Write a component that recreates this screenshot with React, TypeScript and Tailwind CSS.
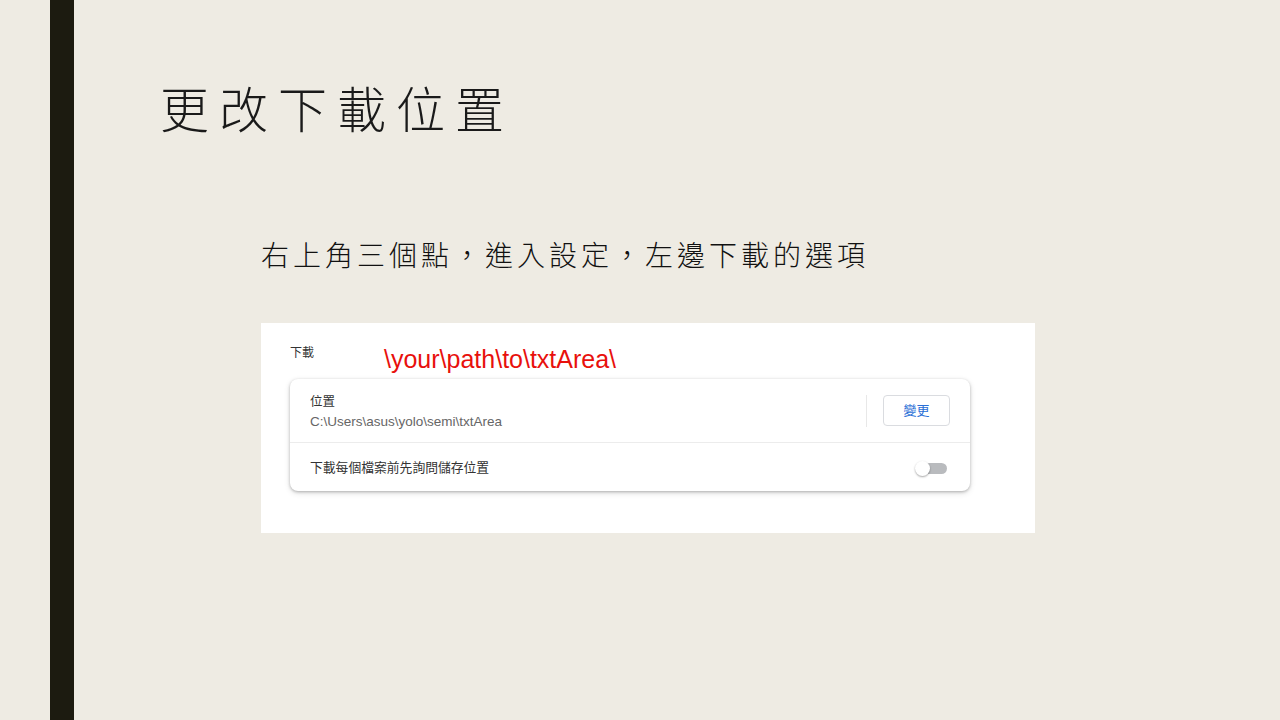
export default function App() {
  const cjk = "'Noto Sans CJK TC', 'Noto Sans', sans-serif";
  const ui = "'Liberation Sans', 'Noto Sans CJK TC', sans-serif";

  return (
    <div className="w-[1280px] h-[720px] bg-[#eeebe3] flex overflow-hidden">
      {/* left accent bar */}
      <div className="ml-[50px] w-[24px] h-full bg-[#1c1b10]" />

      <div className="flex-1 flex flex-col">
        {/* title */}
        <h1
          className="ml-[86px] mt-[76px] text-[49px] leading-[62px] tracking-[10px] text-[#1a1a1a] font-light"
          style={{ fontFamily: cjk }}
        >
          更改下載位置
        </h1>

        {/* subtitle */}
        <p
          className="ml-[187px] mt-[98px] text-[28px] leading-[36px] tracking-[4px] text-[#111] font-light"
          style={{ fontFamily: cjk }}
        >
          右上角三個點，進入設定，左邊下載的選項
        </p>

        {/* screenshot panel */}
        <div className="ml-[187px] mt-[51px] w-[774px] h-[210px] bg-white flex flex-col pl-[29px] pt-[20px]">
          <div className="flex items-start h-[36px]">
            <span className="text-[12px] leading-[18px] text-[#333] mt-[1px] w-[94px]" style={{ fontFamily: ui }}>
              下載
            </span>
            <span
              className="text-[25px] leading-[30px] text-[#e8100c] mt-[1px]"
              style={{ fontFamily: "'Liberation Sans', Arial, sans-serif" }}
            >
              \your\path\to\txtArea\
            </span>
          </div>

          <div className="w-[680px] bg-white rounded-[8px] shadow-[0_1px_3px_rgba(0,0,0,0.25),0_2px_6px_rgba(0,0,0,0.12)] flex flex-col">
            <div className="h-[64px] flex items-center pl-[20px] pr-[20px] border-b border-[#ececec]">
              <div className="flex-1 flex flex-col pt-[2px]" style={{ fontFamily: ui }}>
                <span className="text-[12.5px] leading-[16px] text-[#333]">位置</span>
                <span className="text-[13.5px] leading-[16px] mt-[4px] text-[#666]">
                  C:\Users\asus\yolo\semi\txtArea
                </span>
              </div>
              <div className="w-px h-[32px] bg-[#e8e8e8] mr-[16px]" />
              <button
                className="w-[67px] h-[31px] rounded-[4px] border border-[#dadce0] text-[13px] text-[#2a6fd6] bg-white"
                style={{ fontFamily: ui }}
              >
                變更
              </button>
            </div>
            <div className="h-[48px] flex items-center pl-[20px] pr-[23px] pt-[2px]">
              <span className="flex-1 text-[12.8px] text-[#333]" style={{ fontFamily: ui }}>
                下載每個檔案前先詢問儲存位置
              </span>
              <div className="relative w-[32px] h-[14px]">
                <div className="absolute left-[3px] right-0 top-[2px] h-[11px] rounded-full bg-[#b9bbbe]" />
                <div className="absolute left-0 top-0 w-[15px] h-[15px] rounded-full bg-white shadow-[0_1px_2px_rgba(0,0,0,0.35)]" />
              </div>
            </div>
          </div>
        </div>
      </div>
    </div>
  );
}
